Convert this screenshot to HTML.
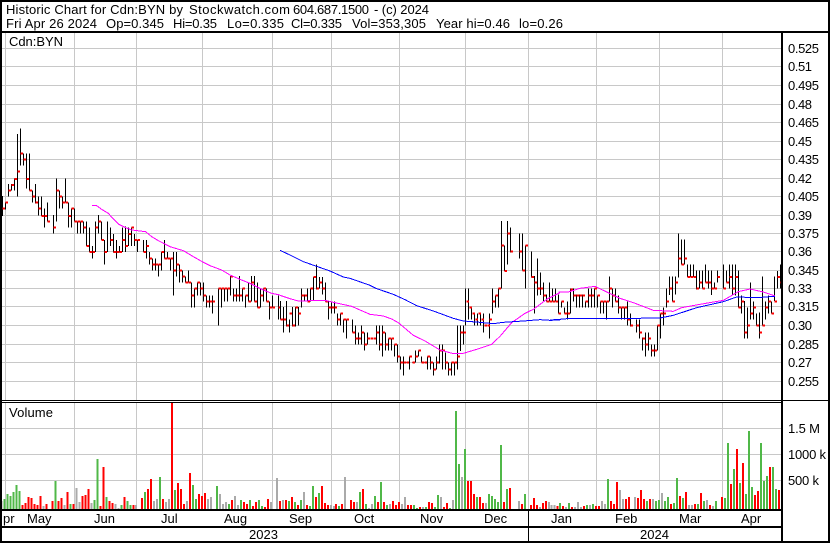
<!DOCTYPE html>
<html><head><meta charset="utf-8"><style>
html,body{margin:0;padding:0;background:#fff;width:830px;height:543px;overflow:hidden}
svg{display:block}
text{font-family:"Liberation Sans",Arial,sans-serif;font-size:13px;fill:#000;white-space:pre}
</style></head><body>
<svg width="830" height="543" viewBox="0 0 830 543" xmlns="http://www.w3.org/2000/svg">
<rect width="830" height="543" fill="#fff"/>
<g shape-rendering="crispEdges" fill="none">
<path stroke="#c8c8c8" stroke-width="1" d="M5.5 33V400M74.5 33V400M136.5 33V400M202.5 33V400M272.5 33V400M331.5 33V400M399.5 33V400M465.5 33V400M528.5 33V400M596.5 33V400M659.5 33V400M722.5 33V400M5.5 403V509M74.5 403V509M136.5 403V509M202.5 403V509M272.5 403V509M331.5 403V509M399.5 403V509M465.5 403V509M528.5 403V509M596.5 403V509M659.5 403V509M722.5 403V509M2 48.5H781M2 66.5H781M2 85.5H781M2 104.5H781M2 122.5H781M2 141.5H781M2 159.5H781M2 178.5H781M2 196.5H781M2 215.5H781M2 233.5H781M2 251.5H781M2 270.5H781M2 288.5H781M2 306.5H781M2 325.5H781M2 344.5H781M2 362.5H781M2 381.5H781M2 428.5H781M2 454.5H781M2 480.5H781"/>

<!-- volume: left part -->
<g transform="translate(0 400) scale(.33333)" stroke-width="6">
<path stroke="#aaa" d="M5 303V327M131 318V327M194 315V327M230 264V327M239 306V327M275 309V327M347 312V327M356 324V327M408 315V327M462 303V327M471 297V327M498 306V327M507 297V327M561 303V327M624 297V327M633 291V327M660 282V327M669 312V327M678 306V327M705 288V327M714 315V327M813 306V327M831 234V327"/>
<path stroke="#50b848" d="M14 297V327M23 282V327M32 288V327M41 276V327M50 255V327M59 273V327M167 243V327M212 312V327M284 300V327M293 177V327M320 291V327M365 315V327M383 303V327M392 315V327M435 276V327M480 231V327M525 270V327M579 255V327M588 297V327M651 258V327M687 312V327M723 300V327M750 300V327M777 300V327M786 318V327"/>
<path stroke="#f00" d="M68 315V327M77 309V327M86 291V327M95 294V327M104 312V327M113 315V327M122 288V327M140 312V327M158 303V327M176 303V327M185 294V327M203 276V327M221 312V327M248 288V327M257 285V327M266 267V327M302 318V327M311 201V327M329 303V327M338 309V327M374 291V327M401 315V327M426 294V327M444 267V327M453 237V327M489 297V327M516 6V327M534 249V327M543 267V327M552 312V327M570 219V327M597 282V327M606 288V327M615 279V327M696 300V327M732 306V327M741 312V327M759 318V327M768 306V327M795 321V327M804 297V327M840 303V327"/>
</g>
<!-- volume: middle part -->
<g transform="translate(280 400) scale(.33333)" stroke-width="6">
<path stroke="#aaa" d="M9 300V327M72 276V327M153 315V327M162 318V327M195 231V327M231 306V327M267 324V327M276 312V327M330 312V327M366 312V327M375 291V327M429 321V327M483 291V327M519 300V327M546 231V327M618 309V327M717 303V327M780 321V327M807 306V327"/>
<path stroke="#50b848" d="M27 303V327M45 306V327M63 300V327M90 318V327M99 258V327M117 279V327M177 318V327M240 276V327M258 312V327M285 288V327M303 246V327M321 315V327M402 315V327M411 324V327M438 321V327M465 321V327M474 285V327M510 324V327M528 33V327M537 192V327M555 147V327M591 291V327M627 282V327M636 288V327M645 297V327M654 306V327M663 135V327M681 267V327M735 282V327"/>
<path stroke="#f00" d="M18 300V327M36 291V327M54 315V327M81 315V327M108 291V327M126 258V327M135 309V327M144 315V327M168 312V327M186 312V327M213 300V327M222 306V327M249 267V327M294 306V327M312 306V327M339 303V327M348 315V327M357 306V327M384 315V327M393 315V327M420 321V327M447 306V327M456 309V327M492 321V327M501 309V327M564 243V327M573 243V327M582 282V327M600 291V327M609 309V327M672 306V327M690 264V327M726 312V327M753 315V327M762 294V327M771 315V327M789 309V327M798 303V327"/>
</g>
<!-- volume: right part -->
<g transform="translate(550 400) scale(.33333)" stroke-width="6">
<path stroke="#aaa" d="M5 315V327M14 315V327M48 321V327M75 321V327M84 306V327M93 321V327M120 315V327M156 303V327M165 312V327M210 270V327M219 297V327M255 291V327M309 297V327M336 279V327M417 315V327M426 315V327M471 300V327M489 318V327"/>
<path stroke="#50b848" d="M30 309V327M57 309V327M111 315V327M129 312V327M174 237V327M291 303V327M318 303V327M327 300V327M345 303V327M354 291V327M372 309V327M381 234V327M399 294V327M444 312V327M462 303V327M498 303V327M525 294V327M534 129V327M552 207V327M570 249V327M588 282V327M597 93V327M606 261V327M633 129V327M642 243V327M651 228V327M669 201V327M678 267V327"/>
<path stroke="#f00" d="M23 318V327M39 318V327M66 321V327M102 318V327M138 318V327M147 318V327M183 303V327M192 312V327M201 246V327M228 297V327M237 291V327M264 294V327M273 270V327M282 297V327M300 297V327M363 312V327M390 288V327M408 276V327M435 312V327M453 279V327M480 315V327M516 291V327M543 252V327M561 147V327M579 189V327M615 285V327M624 273V327M660 201V327M687 270V327"/>
</g>

<!-- price bars: left -->
<g transform="translate(0 120) scale(.33333)">
<path stroke="#000" stroke-width="3" d="M7 228V288M16 248V268M25 192V230M34 192V212M43 175V212M52 42V230M61 25V137M70 100V137M79 100V205M88 100V212M97 212V248M106 192V250M115 230V286M124 230V288M133 266V323M142 248V305M160 285V341M169 175V305M178 212V266M187 230V266M196 175V248M205 248V323M214 266V323M223 266V305M232 305V341M241 305V341M250 305V341M259 305V378M268 323V396M277 378V416M286 305V396M295 285V341M304 305V360M313 360V433M322 305V396M331 323V378M340 342V398M349 360V415M358 378V398M367 323V396M376 320V396M385 323V378M394 323V378M403 342V378M412 360V396M430 360V396M439 360V415M448 396V433M457 416V451M466 416V451M475 433V470M484 396V451M493 360V415M502 396V415M511 415V451M520 396V526M529 396V470M538 433V488M547 451V488M556 470V488M565 451V488M574 488V562M583 505V562M592 488V526M601 488V526M610 488V545M619 526V562M628 526V562M637 526V580M655 505V616M664 505V562M673 505V545M682 505V545M691 468V526M700 505V545M709 505V545M718 468V545M727 505V545M736 526V562M745 488V545M754 468V545M763 468V545M772 488V562M781 505V562M790 505V545M799 505V545M808 545V598M817 526V562M835 526V598"/>
<path stroke="#f00" stroke-width="6" d="M7 266h8M16 248h8M25 212h8M34 195h8M43 177h8M52 155h8M61 101h8M70 119h8M79 177h8M88 212h8M97 230h8M106 248h8M115 266h8M124 288h8M133 288h8M142 305h8M160 323h8M169 212h8M178 230h8M187 248h8M196 248h8M205 288h8M214 266h8M223 305h8M232 305h8M241 305h8M250 323h8M259 378h8M268 396h8M277 396h8M286 323h8M295 305h8M304 360h8M313 396h8M331 360h8M340 396h8M349 396h8M358 396h8M367 360h8M376 378h8M385 342h8M394 323h8M403 360h8M412 360h8M430 396h8M439 378h8M448 416h8M457 433h8M466 433h8M475 433h8M484 396h8M493 416h8M502 416h8M511 416h8M520 451h8M529 433h8M538 451h8M547 470h8M556 488h8M565 488h8M574 526h8M583 505h8M592 488h8M601 505h8M610 526h8M619 545h8M628 545h8M637 545h8M655 505h8M664 505h8M673 505h8M682 505h8M691 470h8M700 526h8M709 526h8M718 526h8M727 505h8M736 526h8M745 545h8M754 488h8M763 545h8M772 562h8M781 526h8M790 505h8M799 545h8M808 562h8M817 562h8M835 562h8"/>
<path stroke="#f0f" stroke-width="3" d="M276 256L290 257L305 268L325 280L340 297L355 312L375 322L395 330L437 335L455 350L475 362L510 380L550 392L580 410L610 427L630 437L665 450L690 465L720 478L750 490L790 510L815 520L840 525"/>
</g>
<!-- price bars: middle -->
<g transform="translate(280 181) scale(.33333)">
<path stroke="#000" stroke-width="3" d="M1 360V415M10 378V455M19 360V437M28 415V455M37 378V437M46 378V437M55 378V433M64 322V380M73 340V362M82 322V362M91 322V362M100 288V360M109 250V325M118 288V322M127 288V340M136 305V362M145 362V415M154 362V398M163 362V398M172 398V433M181 398V433M190 415V455M199 415V472M217 415V455M226 433V490M235 455V490M244 433V490M253 455V508M262 455V490M289 433V490M298 433V508M307 433V526M316 455V508M325 472V508M334 472V508M343 490V526M352 490V544M361 526V565M370 526V583M379 544V546M388 526V565M397 544V546M406 508V544M415 508V526M424 526V544M433 544V546M442 526V565M451 526V565M460 544V583M469 526V565M478 490V547M487 490V565M496 515V565M505 544V583M514 544V583M523 544V583M532 433V565M541 433V510M550 433V490M556 322V433M565 322V415M574 380V415M583 398V433M592 398V433M601 398V433M610 398V455M619 433V437M628 398V472M637 322V398M646 344V380M655 322V380M664 120V322M673 194V270M682 120V250M691 140V214M718 157V233M727 157V268M736 194V322M754 211V290M763 285V398M772 232V344M781 275V342M790 305V360M799 340V362M808 305V362M817 322V362M826 322V362"/>
<path stroke="#f00" stroke-width="6" d="M1 415h8M10 415h8M19 433h8M28 398h8M37 433h8M46 380h8M55 398h8M64 344h8M73 344h8M82 362h8M91 322h8M100 288h8M109 322h8M118 305h8M127 322h8M136 362h8M145 380h8M154 380h8M163 380h8M172 415h8M181 398h8M190 415h8M199 415h8M217 455h8M226 472h8M235 472h8M244 455h8M253 490h8M262 472h8M271 472h8M280 472h8M289 455h8M298 490h8M307 455h8M316 490h8M325 472h8M334 472h8M343 490h8M352 526h8M361 544h8M370 544h8M379 544h8M388 526h8M397 544h8M406 526h8M415 508h8M424 544h8M433 544h8M442 526h8M451 544h8M460 565h8M469 544h8M478 508h8M487 508h8M496 544h8M505 565h8M514 544h8M523 544h8M532 526h8M541 455h8M550 455h8M559 362h8M568 380h8M577 398h8M586 415h8M595 398h8M604 415h8M613 433h8M622 433h8M628 415h8M637 362h8M646 344h8M655 322h8M664 194h8M673 270h8M682 157h8M691 212h8M718 212h8M727 268h8M736 194h8M754 288h8M763 305h8M772 322h8M781 322h8M790 344h8M799 362h8M808 362h8M817 362h8M826 362h8"/>
<path stroke="#f0f" stroke-width="3" d="M0 343L30 353L55 360L135 358L160 364L215 376L270 400L310 405L335 414L355 425L400 463L435 480L480 507L520 518L550 517L590 505L635 490L660 466L695 425L735 397L760 385L800 355L840 335"/>
<path stroke="#00f" stroke-width="3" d="M0 208L30 222L70 242L110 256L150 270L190 288L210 292L270 313L290 323L340 340L375 356L410 374L460 390L520 412L550 420L600 424L640 428L670 424L730 420L780 416L810 418L840 417"/>
</g>
<!-- price bars: right -->
<g transform="translate(550 181) scale(.33333)">
<path stroke="#000" stroke-width="3" d="M25 340V398M34 362V380M43 380V398M52 362V415M61 322V398M70 322V362M79 340V380M88 340V380M97 340V380M106 362V380M115 322V380M124 322V380M133 322V380M142 344V380M151 362V398M160 362V398M169 362V415M178 286V362M187 322V380M196 322V362M205 344V398M214 380V415M223 380V415M232 362V433M241 398V437M259 415V455M268 415V472M277 470V508M286 455V526M295 455V508M304 490V526M313 490V526M322 433V508M331 398V472M340 380V433M349 322V380M358 286V342M367 286V362M376 286V340M385 157V290M394 175V250M403 175V250M412 250V288M421 250V288M430 250V288M439 268V325M448 268V322M457 268V322M466 250V305M475 268V322M484 268V342M493 305V322M502 268V305M520 250V322M529 268V305M538 250V322M547 250V342M556 250V344M565 268V380M574 344V398M583 360V472M592 380V472M601 305V415M610 362V415M619 398V433M628 395V472M637 286V433M646 362V415M655 344V398M664 362V398M673 286V360M682 270V322M691 250V322"/>
<path stroke="#f00" stroke-width="6" d="M25 398h8M34 362h8M43 398h8M52 398h8M61 325h8M70 344h8M79 344h8M88 344h8M97 344h8M106 362h8M115 344h8M124 344h8M133 322h8M142 344h8M151 362h8M160 362h8M169 362h8M178 322h8M187 344h8M196 362h8M205 380h8M214 380h8M223 380h8M232 415h8M241 433h8M259 433h8M268 455h8M277 472h8M286 490h8M295 472h8M304 508h8M313 508h8M322 433h8M331 398h8M340 398h8M349 362h8M358 322h8M367 362h8M376 305h8M385 233h8M394 250h8M403 233h8M412 288h8M421 288h8M430 288h8M439 322h8M448 305h8M457 322h8M466 305h8M475 305h8M484 322h8M493 322h8M502 288h8M520 322h8M529 305h8M538 288h8M547 322h8M556 288h8M565 380h8M574 362h8M583 455h8M592 433h8M601 398h8M610 380h8M619 433h8M628 455h8M637 433h8M646 380h8M655 362h8M664 398h8M673 362h8M682 288h8M691 305h6"/>
<path stroke="#f0f" stroke-width="3" d="M25 333L55 333L90 322L135 316L185 340L210 352L250 365L310 388L370 391L395 380L450 370L520 358L565 332L600 324L640 333L675 345"/>
<path stroke="#00f" stroke-width="3" d="M0 417L30 415L50 413L180 413L330 411L370 403L440 380L520 362L560 348L620 350L675 346"/>
</g>

<!-- frame -->
<path stroke="#000" stroke-width="2" d="M0 1H830M0 32H830M0 510H782M0 527H782M0 542H830M1 0V543M782 31V543M829 0V543"/>
<path stroke="#000" stroke-width="1" d="M0 400.5H830M0 402.5H782M528.5 510V541"/>
</g>

<text x="6" y="14" textLength="177">Historic Chart for Cdn:BYN by</text>
<text x="189" y="14" textLength="101">Stockwatch.com</text>
<text x="293" y="14" textLength="76">604.687.1500</text>
<text x="374" y="14" textLength="55">- (c) 2024</text>
<text x="6" y="28" textLength="91">Fri Apr 26 2024</text>
<text x="106" y="28" textLength="58">Op=0.345</text>
<text x="173" y="28" textLength="44">Hi=0.35</text>
<text x="227" y="28" textLength="57">Lo=0.335</text>
<text x="291" y="28" textLength="51">Cl=0.335</text>
<text x="352" y="28" textLength="74">Vol=353,305</text>
<text x="436" y="28" textLength="74">Year hi=0.46</text>
<text x="519" y="28" textLength="44">lo=0.26</text>
<text x="9" y="46" textLength="54">Cdn:BYN</text>
<text x="9" y="417" textLength="44">Volume</text>

<text x="788" y="53" textLength="31">0.525</text>
<text x="788" y="71" textLength="24">0.51</text>
<text x="788" y="90" textLength="31">0.495</text>
<text x="788" y="109" textLength="24">0.48</text>
<text x="788" y="127" textLength="31">0.465</text>
<text x="788" y="146" textLength="24">0.45</text>
<text x="788" y="164" textLength="31">0.435</text>
<text x="788" y="183" textLength="24">0.42</text>
<text x="788" y="201" textLength="31">0.405</text>
<text x="788" y="220" textLength="24">0.39</text>
<text x="788" y="238" textLength="31">0.375</text>
<text x="788" y="256" textLength="24">0.36</text>
<text x="788" y="275" textLength="31">0.345</text>
<text x="788" y="293" textLength="24">0.33</text>
<text x="788" y="311" textLength="31">0.315</text>
<text x="788" y="330" textLength="24">0.30</text>
<text x="788" y="349" textLength="31">0.285</text>
<text x="788" y="367" textLength="24">0.27</text>
<text x="788" y="386" textLength="31">0.255</text>

<text x="788" y="433" textLength="32">1.5 M</text>
<text x="788" y="459" textLength="38">1000 k</text>
<text x="788" y="485" textLength="31">500 k</text>

<text x="3" y="523">pr</text>
<text x="27" y="523">May</text>
<text x="94" y="523">Jun</text>
<text x="161" y="523">Jul</text>
<text x="224" y="523">Aug</text>
<text x="289" y="523">Sep</text>
<text x="354" y="523">Oct</text>
<text x="420" y="523">Nov</text>
<text x="484" y="523">Dec</text>
<text x="551" y="523">Jan</text>
<text x="615" y="523">Feb</text>
<text x="679" y="523">Mar</text>
<text x="741" y="523">Apr</text>
<text x="249" y="539">2023</text>
<text x="640" y="539">2024</text>
</svg>
</body></html>
